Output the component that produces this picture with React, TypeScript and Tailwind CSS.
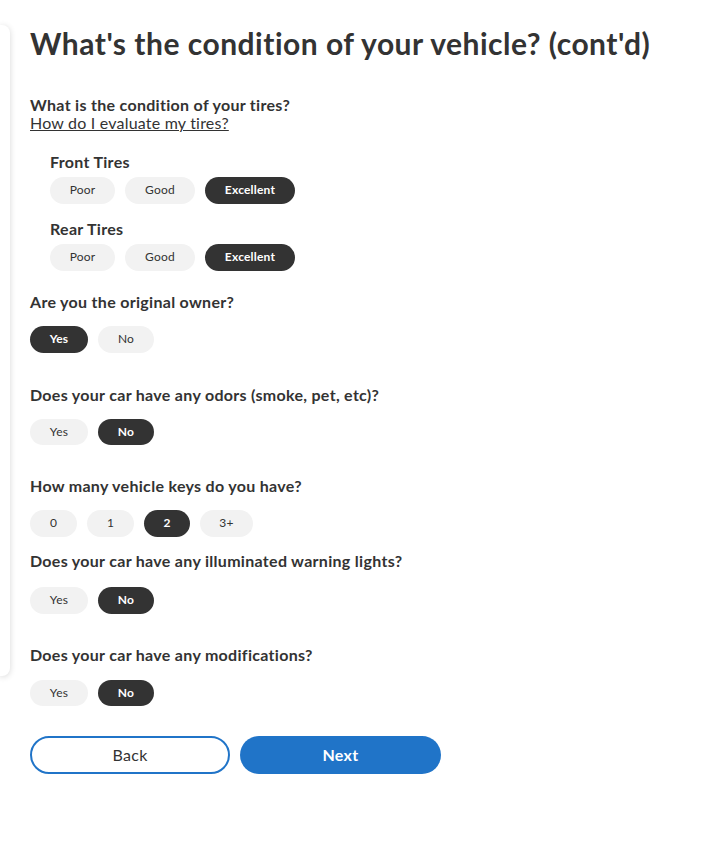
import { useState } from "react";

type Option = { label: string; w: string };

const conditionOptions: Option[] = [
  { label: "Poor", w: "w-[65px]" },
  { label: "Good", w: "w-[70px]" },
  { label: "Excellent", w: "w-[90px]" },
];

const yesNo: Option[] = [
  { label: "Yes", w: "w-[58px]" },
  { label: "No", w: "w-[56px]" },
];

const keyOptions: Option[] = [
  { label: "0", w: "w-[47px]" },
  { label: "1", w: "w-[47px]" },
  { label: "2", w: "w-[46px]" },
  { label: "3+", w: "w-[53px]" },
];

function PillGroup({
  options,
  value,
  onChange,
  className = "",
}: {
  options: Option[];
  value: string;
  onChange: (v: string) => void;
  className?: string;
}) {
  return (
    <div className={`flex gap-[10px] ${className}`}>
      {options.map((opt) => {
        const active = opt.label === value;
        return (
          <button
            key={opt.label}
            type="button"
            onClick={() => onChange(opt.label)}
            className={`${opt.w} flex h-[26.5px] items-center justify-center rounded-full text-[12px] leading-none tracking-[0.2px] ${
              active
                ? "bg-[#333333] font-bold text-white"
                : "bg-[#f2f2f2] text-[#333333]"
            }`}
          >
            {opt.label}
          </button>
        );
      })}
    </div>
  );
}

function Label({
  children,
  className = "",
}: {
  children: React.ReactNode;
  className?: string;
}) {
  return (
    <p
      className={`text-[16px] font-bold leading-[20px] tracking-[0.3px] text-[#333333] ${className}`}
    >
      {children}
    </p>
  );
}

export default function App() {
  const [front, setFront] = useState("Excellent");
  const [rear, setRear] = useState("Excellent");
  const [owner, setOwner] = useState("Yes");
  const [odors, setOdors] = useState("No");
  const [keys, setKeys] = useState("2");
  const [lights, setLights] = useState("No");
  const [mods, setMods] = useState("No");

  return (
    <div className="flex min-h-[855px] bg-white font-['Lato',sans-serif] text-[#333333]">
      {/* side card peeking in from the left */}
      <div className="mt-[25px] h-[651px] w-[10px] shrink-0 rounded-r-[8px] bg-white shadow-[0_1px_6px_rgba(0,0,0,0.16)]" />

      <div className="ml-[20px] flex flex-col">
        <h1 className="mt-[25px] text-[30px] font-bold leading-[36px] tracking-[0.5px] text-[#333333]">
          What's the condition of your vehicle? (cont'd)
        </h1>

        <p className="mt-[35px] text-[16px] font-bold leading-[18px] tracking-[0.3px]">
          What is the condition of your tires?
        </p>
        <a
          href="#"
          className="text-[16px] leading-[18px] tracking-[0.2px] text-[#333333] underline"
        >
          How do I evaluate my tires?
        </a>

        <div className="ml-[20px] flex flex-col">
          <Label className="mt-[20px]">Front Tires</Label>
          <PillGroup
            className="mt-[5px]"
            options={conditionOptions}
            value={front}
            onChange={setFront}
          />
          <Label className="mt-[15.5px]">Rear Tires</Label>
          <PillGroup
            className="mt-[5px]"
            options={conditionOptions}
            value={rear}
            onChange={setRear}
          />
        </div>

        <Label className="mt-[21px]">Are you the original owner?</Label>
        <PillGroup className="mt-[14.5px]" options={yesNo} value={owner} onChange={setOwner} />

        <Label className="mt-[32px]">Does your car have any odors (smoke, pet, etc)?</Label>
        <PillGroup className="mt-[14px]" options={yesNo} value={odors} onChange={setOdors} />

        <Label className="mt-[31px]">How many vehicle keys do you have?</Label>
        <PillGroup className="mt-[14px]" options={keyOptions} value={keys} onChange={setKeys} />

        <Label className="mt-[14.5px]">Does your car have any illuminated warning lights?</Label>
        <PillGroup className="mt-[16px]" options={yesNo} value={lights} onChange={setLights} />

        <Label className="mt-[31px]">Does your car have any modifications?</Label>
        <PillGroup className="mt-[15px]" options={yesNo} value={mods} onChange={setMods} />

        <div className="mt-[30px] flex gap-[10px]">
          <button
            type="button"
            className="h-[38px] w-[200px] rounded-full border-2 border-[#2074c8] bg-white text-[16px] tracking-[0.3px] text-[#333333]"
          >
            Back
          </button>
          <button
            type="button"
            className="h-[38px] w-[201px] rounded-full bg-[#2074c8] text-[16px] font-bold tracking-[0.3px] text-white"
          >
            Next
          </button>
        </div>
      </div>
    </div>
  );
}
